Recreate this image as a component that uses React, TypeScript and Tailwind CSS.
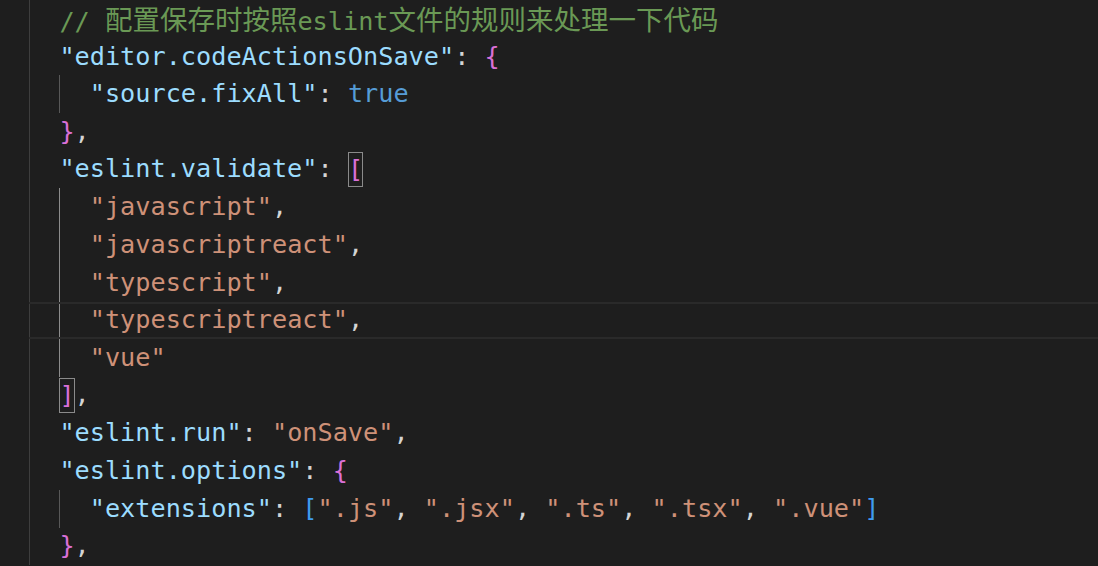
type Tone = 'key' | 'str' | 'punct' | 'kw' | 'comment' | 'brace' | 'bracket'

type Token = { text: string; tone: Tone; boxed?: boolean; cjk?: boolean }

type Line = {
  depth: 1 | 2
  guide?: 'dim' | 'active'
  current?: boolean
  tokens: Token[]
}

const toneClass: Record<Tone, string> = {
  key: 'text-[#9cdcfe]',
  str: 'text-[#ce9178]',
  punct: 'text-[#d4d4d4]',
  kw: 'text-[#569cd6]',
  comment: 'text-[#6a9955]',
  brace: 'text-[#da70d6]',
  bracket: 'text-[#3f9bf0]',
}

const k = (text: string): Token => ({ text, tone: 'key' })
const s = (text: string): Token => ({ text, tone: 'str' })
const p = (text: string): Token => ({ text, tone: 'punct' })

const LINES: Line[] = [
  {
    depth: 1,
    tokens: [
      { text: '// ', tone: 'comment' },
      { text: '配置保存时按照', tone: 'comment', cjk: true },
      { text: 'eslint', tone: 'comment' },
      { text: '文件的规则来处理一下代码', tone: 'comment', cjk: true },
    ],
  },
  { depth: 1, tokens: [k('"editor.codeActionsOnSave"'), p(': '), { text: '{', tone: 'brace' }] },
  { depth: 2, guide: 'dim', tokens: [k('"source.fixAll"'), p(': '), { text: 'true', tone: 'kw' }] },
  { depth: 1, tokens: [{ text: '}', tone: 'brace' }, p(',')] },
  { depth: 1, tokens: [k('"eslint.validate"'), p(': '), { text: '[', tone: 'brace', boxed: true }] },
  { depth: 2, guide: 'active', tokens: [s('"javascript"'), p(',')] },
  { depth: 2, guide: 'active', tokens: [s('"javascriptreact"'), p(',')] },
  { depth: 2, guide: 'active', tokens: [s('"typescript"'), p(',')] },
  { depth: 2, guide: 'active', current: true, tokens: [s('"typescriptreact"'), p(',')] },
  { depth: 2, guide: 'active', tokens: [s('"vue"')] },
  { depth: 1, tokens: [{ text: ']', tone: 'brace', boxed: true }, p(',')] },
  { depth: 1, tokens: [k('"eslint.run"'), p(': '), s('"onSave"'), p(',')] },
  { depth: 1, tokens: [k('"eslint.options"'), p(': '), { text: '{', tone: 'brace' }] },
  {
    depth: 2,
    guide: 'dim',
    tokens: [
      k('"extensions"'),
      p(': '),
      { text: '[', tone: 'bracket' },
      s('".js"'),
      p(', '),
      s('".jsx"'),
      p(', '),
      s('".ts"'),
      p(', '),
      s('".tsx"'),
      p(', '),
      s('".vue"'),
      { text: ']', tone: 'bracket' },
    ],
  },
  { depth: 1, tokens: [{ text: '}', tone: 'brace' }, p(',')] },
]

function CodeToken({ token }: { token: Token }) {
  if (token.boxed) {
    return (
      <span
        className={`inline-block h-[35px] align-middle leading-[35px] outline-1 -outline-offset-1 outline-[#8a8a8a] ${toneClass[token.tone]}`}
      >
        {token.text}
      </span>
    )
  }
  return (
    <span
      className={`${toneClass[token.tone]} ${
        token.cjk ? "font-['Noto_Sans_CJK_SC',sans-serif] text-[27.5px] leading-[37px]" : ''
      }`}
    >
      {token.text}
    </span>
  )
}

function CodeLine({ line }: { line: Line }) {
  return (
    <div
      className={`flex h-[37.7px] items-center whitespace-pre ${
        line.current ? 'border-y-2 border-[#2a2a2a]' : ''
      }`}
    >
      <span className="h-full w-[30.38px] shrink-0 border-l border-[#3e3e3e]" />
      {line.depth === 2 && (
        <span
          className={`h-full w-[30.38px] shrink-0 border-l ${
            line.guide === 'active' ? 'border-[#8c8c8c]' : 'border-[#585858]'
          }`}
        />
      )}
      <span>
        {line.tokens.map((token, i) => (
          <CodeToken key={i} token={token} />
        ))}
      </span>
    </div>
  )
}

export default function App() {
  return (
    <div className="h-[566px] w-[1098px] overflow-hidden bg-[#1e1e1e] pl-[29px] font-['DejaVu_Sans_Mono','Noto_Sans_CJK_SC',monospace] text-[25.23px] leading-[30px]">
      {LINES.map((line, i) => (
        <CodeLine key={i} line={line} />
      ))}
    </div>
  )
}
